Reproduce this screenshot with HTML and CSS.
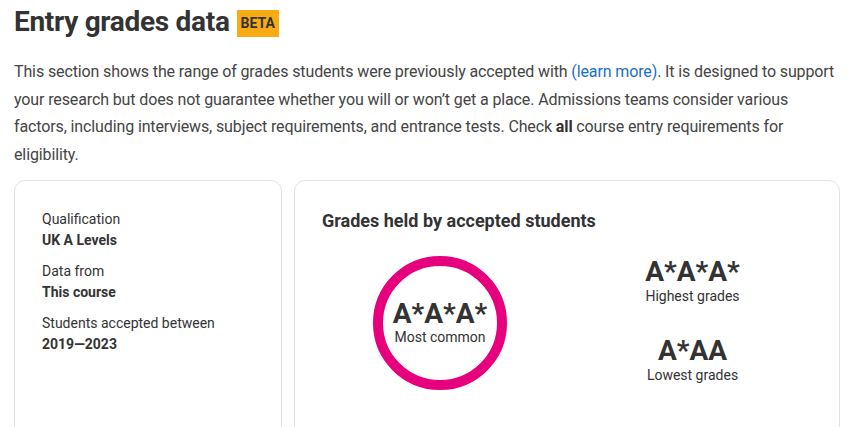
FILE: index.html
```html
<!DOCTYPE html>
<html lang="en">
<head>
<meta charset="utf-8">
<link rel="stylesheet" href="styles.css">
</head>
<body>
<main class="page">
  <h1 class="title">Entry grades data <span class="badge">BETA</span></h1>
  <p class="intro">This section shows the range of grades students were previously accepted with <a href="#" class="link">(learn more)</a>. It is designed to support your research but does not guarantee whether you will or won’t get a place. Admissions teams consider various factors, including interviews, subject requirements, and entrance tests. Check <strong>all</strong> course entry requirements for eligibility.</p>
  <div class="cards">
    <section class="card info">
      <div class="item"><div class="label">Qualification</div><div class="value">UK A Levels</div></div>
      <div class="item"><div class="label">Data from</div><div class="value">This course</div></div>
      <div class="item"><div class="label">Students accepted between</div><div class="value">2019—2023</div></div>
    </section>
    <section class="card grades">
      <h2 class="grades-title">Grades held by accepted students</h2>
      <div class="grades-body">
        <div class="ring-col">
          <div class="ring">
            <div class="grade">A*A*A*</div>
            <div class="caption">Most common</div>
          </div>
        </div>
        <div class="range-col">
          <div class="range"><div class="grade">A*A*A*</div><div class="caption">Highest grades</div></div>
          <div class="range"><div class="grade">A*AA</div><div class="caption">Lowest grades</div></div>
        </div>
      </div>
    </section>
  </div>
</main>
</body>
</html>
```
FILE: styles.css
```css
* { box-sizing: border-box; }
html, body { margin: 0; padding: 0; background: #fff; }
body {
  font-family: Roboto, "Liberation Sans", Arial, sans-serif;
  color: #333;
}
.page { padding: 2px 10px 0 14px; }
.title {
  margin: 0;
  font-size: 28px;
  line-height: 40px;
  font-weight: 700;
  letter-spacing: -0.3px;
  color: #333;
  display: flex;
  align-items: center;
  gap: 7px;
}
.badge {
  display: inline-block;
  background: #f9ab14;
  color: #333;
  font-size: 14px;
  font-weight: 700;
  letter-spacing: 0;
  line-height: 27px;
  height: 27px;
  padding: 0 4px;
  margin-top: 2px;
}
.intro {
  margin: 16px 0 0;
  font-size: 16px;
  line-height: 27.5px;
  letter-spacing: -0.12px;
  color: #444;
}
.intro strong { color: #333; }
.link { color: #1a6fc4; text-decoration: none; }
.cards {
  display: grid;
  grid-template-columns: 268px 1fr;
  gap: 12px;
  margin-top: 12px;
  height: 260px;
}
.card {
  border: 1px solid #e3e3e3;
  border-radius: 11px;
  background: #fff;
}
.info {
  padding: 28px 27px;
  display: flex;
  flex-direction: column;
  gap: 10px;
}
.label { font-size: 14px; line-height: 21px; color: #333; }
.value { font-size: 14px; line-height: 21px; font-weight: 700; color: #333; }
.grades { padding: 28px 27px 0 27px; }
.grades-title {
  margin: 0;
  font-size: 18px;
  line-height: 24px;
  font-weight: 700;
  color: #333;
}
.grades-body {
  display: grid;
  grid-template-columns: 1fr 1fr;
  margin-top: 23px;
}
.ring-col { display: flex; justify-content: center; padding-right: 9px; }
.ring {
  width: 134px;
  height: 134px;
  border: 10px solid #e6007e;
  border-radius: 50%;
  display: flex;
  flex-direction: column;
  align-items: center;
  justify-content: center;
  padding-bottom: 2px;
}
.ring .caption { line-height: 17px; }
.grade {
  font-size: 28px;
  line-height: 30px;
  font-weight: 700;
  color: #333;
}
.caption { font-size: 14px; line-height: 18px; color: #333; }
.range-col {
  display: flex;
  flex-direction: column;
  align-items: center;
  gap: 31px;
  padding-left: 6px;
  padding-top: 1px;
}
.range { display: flex; flex-direction: column; align-items: center; }
```
